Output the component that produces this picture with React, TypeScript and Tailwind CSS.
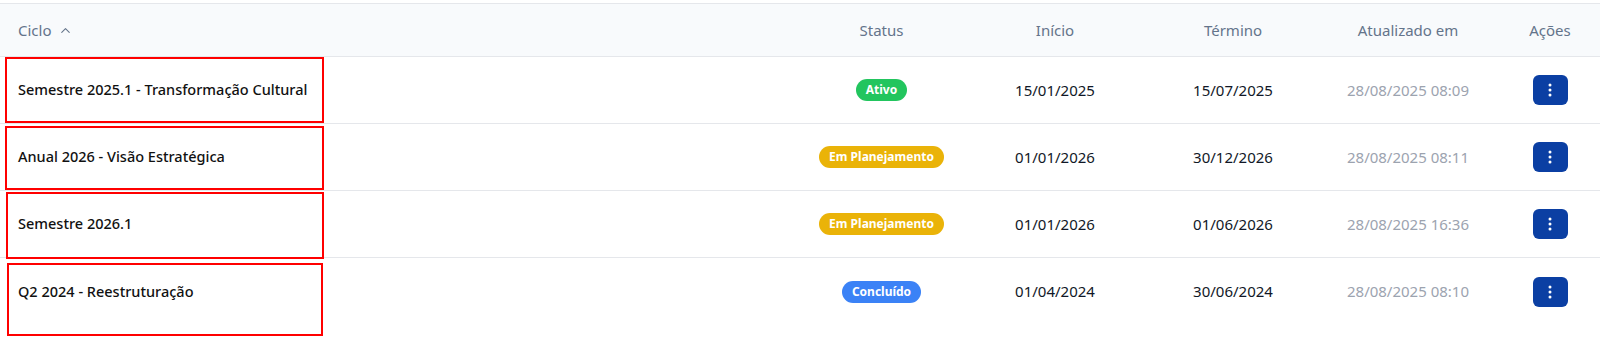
import { ChevronUp } from 'lucide-react';

type Status = 'Ativo' | 'Em Planejamento' | 'Concluído';

interface Ciclo {
  nome: string;
  status: Status;
  inicio: string;
  termino: string;
  atualizado: string;
}

const ciclos: Ciclo[] = [
  {
    nome: 'Semestre 2025.1 - Transformação Cultural',
    status: 'Ativo',
    inicio: '15/01/2025',
    termino: '15/07/2025',
    atualizado: '28/08/2025 08:09',
  },
  {
    nome: 'Anual 2026 - Visão Estratégica',
    status: 'Em Planejamento',
    inicio: '01/01/2026',
    termino: '30/12/2026',
    atualizado: '28/08/2025 08:11',
  },
  {
    nome: 'Semestre 2026.1',
    status: 'Em Planejamento',
    inicio: '01/01/2026',
    termino: '01/06/2026',
    atualizado: '28/08/2025 16:36',
  },
  {
    nome: 'Q2 2024 - Reestruturação',
    status: 'Concluído',
    inicio: '01/04/2024',
    termino: '30/06/2024',
    atualizado: '28/08/2025 08:10',
  },
];

const statusStyle: Record<Status, string> = {
  Ativo: 'bg-[#22c55e]',
  'Em Planejamento': 'bg-[#eab308]',
  Concluído: 'bg-[#3b82f6]',
};

const cols = 'grid grid-cols-[803px_157px_190px_166px_184px_100px]';

function StatusBadge({ status }: { status: Status }) {
  return (
    <span
      className={`inline-flex h-[22px] items-center rounded-full px-2.5 text-xs font-bold text-white ${statusStyle[status]}`}
    >
      {status}
    </span>
  );
}

function ActionButton() {
  return (
    <button className="flex h-[30px] w-[35px] items-center justify-center rounded-md bg-[#0b3fa3]">
      <svg width="4" height="14" viewBox="0 0 4 14" fill="white">
        <circle cx="2" cy="2" r="1.5" />
        <circle cx="2" cy="7" r="1.5" />
        <circle cx="2" cy="12" r="1.5" />
      </svg>
    </button>
  );
}

export default function App() {
  return (
    <div className="relative h-[343px] w-[1600px] overflow-hidden bg-white pt-[3px] font-['Noto_Sans',sans-serif]">
      {/* Cabeçalho */}
      <div
        className={`${cols} h-[54px] items-center border-y border-[#e5e7eb] bg-[#f8fafc] text-[15px] text-[#64748b]`}
      >
        <div className="flex items-center gap-1.5 pl-[18px]">
          Ciclo
          <ChevronUp size={15} strokeWidth={1.75} />
        </div>
        <div className="text-center">Status</div>
        <div className="text-center">Início</div>
        <div className="text-center">Término</div>
        <div className="text-center">Atualizado em</div>
        <div className="text-center">Ações</div>
      </div>

      {/* Linhas */}
      {ciclos.map((c, i) => (
        <div
          key={c.nome}
          className={`${cols} h-[67px] items-center text-[15px] ${
            i < ciclos.length - 1 ? 'border-b border-[#e5e7eb]' : ''
          }`}
        >
          <div className="pl-[18px] text-[14.5px] font-medium text-[#111111]">{c.nome}</div>
          <div className="flex justify-center">
            <StatusBadge status={c.status} />
          </div>
          <div className="text-center text-[#111827]">{c.inicio}</div>
          <div className="text-center text-[#111827]">{c.termino}</div>
          <div className="text-center text-[#9ca3af]">{c.atualizado}</div>
          <div className="flex justify-center">
            <ActionButton />
          </div>
        </div>
      ))}

      {/* Marcações */}
      <div className="absolute left-[5px] top-[57px] h-[66px] w-[319px] border-2 border-[#ff0000]" />
      <div className="absolute left-[5px] top-[126px] h-[64px] w-[319px] border-2 border-[#ff0000]" />
      <div className="absolute left-[6px] top-[192px] h-[67px] w-[318px] border-2 border-[#ff0000]" />
      <div className="absolute left-[7px] top-[263px] h-[73px] w-[316px] border-2 border-[#ff0000]" />
    </div>
  );
}
